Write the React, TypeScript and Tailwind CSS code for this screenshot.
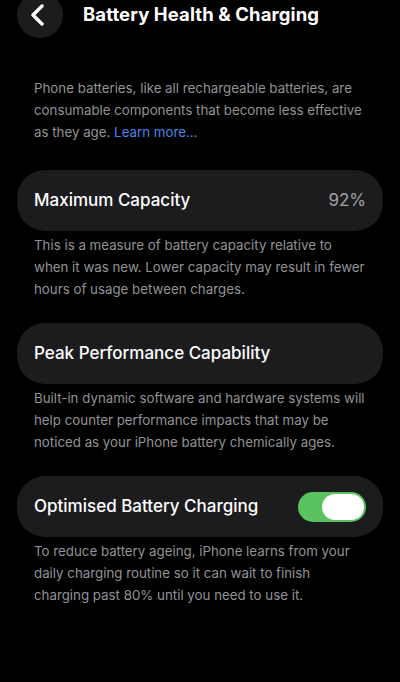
import React from "react";

const font = { fontFamily: "Inter, 'Noto Sans', sans-serif" };

function Card({ children }: { children: React.ReactNode }) {
  return (
    <div className="mx-[17px] h-[61px] rounded-[28px] bg-[#1c1c1e] flex items-center justify-between pl-[17px] pr-[17px]">
      {children}
    </div>
  );
}

function Desc({ children }: { children: React.ReactNode }) {
  return (
    <p className="px-[34px] text-[13.3px] leading-[22px] text-[#929297]">
      {children}
    </p>
  );
}

export default function App() {
  return (
    <div className="w-[400px] h-[682px] bg-black overflow-hidden text-white" style={font}>
      <div className="flex items-center mt-[-8px] pl-[17px] h-[46px]">
        <div className="w-[46px] h-[46px] rounded-full bg-[#1c1c1e] flex items-center justify-center">
          <svg width="16" height="22" viewBox="0 0 16 22" className="ml-[-4px]">
            <path d="M12 2 L3 11 L12 20" fill="none" stroke="white" strokeWidth="3.4" strokeLinecap="round" strokeLinejoin="round" />
          </svg>
        </div>
        <h1 className="ml-[20px] text-[18.5px] font-bold tracking-[0.1px]">Battery Health &amp; Charging</h1>
      </div>

      <div className="mt-[39px]">
        <Desc>
          Phone batteries, like all rechargeable batteries, are consumable components that become less effective as they age.{" "}
          <span className="text-[#4a86e8]">Learn more...</span>
        </Desc>
      </div>

      <div className="mt-[27px]">
        <Card>
          <span className="text-[17px] font-medium">Maximum Capacity</span>
          <span className="text-[17px] text-[#a1a1a6]">92%</span>
        </Card>
        <div className="mt-[3px]">
          <Desc>
            This is a measure of battery capacity relative to when it was new. Lower capacity may result in fewer hours of usage between charges.
          </Desc>
        </div>
      </div>

      <div className="mt-[23px]">
        <Card>
          <span className="text-[17px] font-medium">Peak Performance Capability</span>
        </Card>
        <div className="mt-[3px]">
          <Desc>
            Built-in dynamic software and hardware systems will help counter performance impacts that may be noticed as your iPhone battery chemically ages.
          </Desc>
        </div>
      </div>

      <div className="mt-[23px]">
        <Card>
          <span className="text-[17px] font-medium">Optimised Battery Charging</span>
          <div className="w-[68px] h-[30px] rounded-full bg-[#5ac35f] flex items-center justify-end pr-[2px]">
            <div className="w-[42px] h-[26px] rounded-full bg-white" />
          </div>
        </Card>
        <div className="mt-[3px]">
          <Desc>
            To reduce battery ageing, iPhone learns from your daily charging routine so it can wait to finish charging past 80% until you need to use it.
          </Desc>
        </div>
      </div>
    </div>
  );
}
